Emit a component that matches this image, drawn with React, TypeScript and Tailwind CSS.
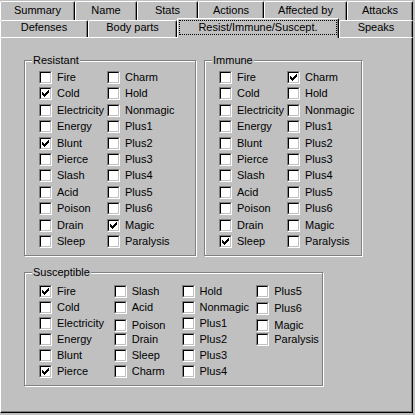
import React from 'react';

type Item = { label: string; checked?: boolean; nudge?: string };

const resistant: Item[][] = [
  [
    { label: 'Fire' }, { label: 'Cold', checked: true }, { label: 'Electricity' }, { label: 'Energy' },
    { label: 'Blunt', checked: true }, { label: 'Pierce' }, { label: 'Slash' }, { label: 'Acid' },
    { label: 'Poison' }, { label: 'Drain' }, { label: 'Sleep' },
  ],
  [
    { label: 'Charm' }, { label: 'Hold' }, { label: 'Nonmagic' }, { label: 'Plus1' }, { label: 'Plus2' },
    { label: 'Plus3' }, { label: 'Plus4' }, { label: 'Plus5' }, { label: 'Plus6' },
    { label: 'Magic', checked: true }, { label: 'Paralysis' },
  ],
];

const immune: Item[][] = [
  [
    { label: 'Fire' }, { label: 'Cold' }, { label: 'Electricity' }, { label: 'Energy' }, { label: 'Blunt' },
    { label: 'Pierce' }, { label: 'Slash' }, { label: 'Acid' }, { label: 'Poison' }, { label: 'Drain' },
    { label: 'Sleep', checked: true },
  ],
  [
    { label: 'Charm', checked: true }, { label: 'Hold' }, { label: 'Nonmagic' }, { label: 'Plus1' },
    { label: 'Plus2' }, { label: 'Plus3' }, { label: 'Plus4' }, { label: 'Plus5' }, { label: 'Plus6' },
    { label: 'Magic' }, { label: 'Paralysis' },
  ],
];

const susceptible: { w: string; items: Item[] }[] = [
  {
    w: 'w-[75px]',
    items: [
      { label: 'Fire', checked: true }, { label: 'Cold' }, { label: 'Electricity' }, { label: 'Energy' },
      { label: 'Blunt' }, { label: 'Pierce', checked: true },
    ],
  },
  {
    w: 'w-[68px]',
    items: [
      { label: 'Slash' }, { label: 'Acid' }, { label: 'Poison', nudge: 'pt-[2px]' }, { label: 'Drain' },
      { label: 'Sleep' }, { label: 'Charm' },
    ],
  },
  {
    w: 'w-[75px]',
    items: [
      { label: 'Hold' }, { label: 'Nonmagic' }, { label: 'Plus1' }, { label: 'Plus2' }, { label: 'Plus3' },
      { label: 'Plus4' },
    ],
  },
  {
    w: 'w-[66px]',
    items: [
      { label: 'Plus5' }, { label: 'Plus6', nudge: 'pt-[1px]' }, { label: 'Magic', nudge: 'pt-[2px]' },
      { label: 'Paralysis' },
    ],
  },
];

function CheckMark() {
  return (
    <svg width="7" height="7" viewBox="0 0 7 7" shapeRendering="crispEdges">
      <path
        d="M6 0h1v1H6z M5 1h2v1H5z M0 2h1v1H0z M4 2h3v1H4z M0 3h2v1H0z M3 3h3v1H3z M0 4h5v1H0z M1 5h3v1H1z M2 6h1v1H2z"
        fill="#000"
      />
    </svg>
  );
}

function Check({ item, row }: { item: Item; row: string }) {
  return (
    <div className={`flex items-start ${row} ${item.nudge ?? ''}`}>
      <div className="w-[13px] h-[13px] shrink-0 border border-t-[#808080] border-l-[#808080] border-r-white border-b-white">
        <div className="w-full h-full flex items-center justify-center bg-white border border-t-black border-l-black border-r-[#c0c0c0] border-b-[#c0c0c0]">
          {item.checked && <CheckMark />}
        </div>
      </div>
      <span className="ml-[5px] leading-[13px] whitespace-nowrap">{item.label}</span>
    </div>
  );
}

function Group({ title, className, children }: { title: string; className: string; children: React.ReactNode }) {
  return (
    <div className={`relative border border-[#808080] shadow-[inset_1px_1px_0_#fff,1px_1px_0_#fff] ${className}`}>
      <span className="absolute -top-[7px] left-[7px] px-[1px] bg-[#c0c0c0] leading-[13px]">{title}</span>
      {children}
    </div>
  );
}

function Tab({ label, w, row2 }: { label: string; w: string; row2?: boolean }) {
  return (
    <div
      className={`${w} ${row2 ? 'h-[17px]' : 'h-[19px] pt-[2px]'} shrink-0 text-center leading-[13px] border-l border-t border-r border-white border-r-black rounded-t-[2px] shadow-[inset_-1px_0_0_#808080]`}
    >
      {label}
    </div>
  );
}

export default function App() {
  return (
    <div className="w-[415px] h-[415px] overflow-hidden bg-[#c0c0c0] pt-[1px] text-[11px] text-black font-['Liberation_Sans',Arial,sans-serif]">
      {/* Tab rows */}
      <div className="flex w-[413px]">
        <Tab label="Summary" w="w-[75px]" />
        <Tab label="Name" w="w-[62px]" />
        <Tab label="Stats" w="w-[61px]" />
        <Tab label="Actions" w="w-[66px]" />
        <Tab label="Affected by" w="w-[83px]" />
        <Tab label="Attacks" w="w-[66px]" />
      </div>
      <div className="flex w-[413px] h-[17px]">
        <Tab label="Defenses" w="w-[88px]" row2 />
        <Tab label="Body parts" w="w-[89px]" row2 />
        <div className="relative z-10 w-[162px] h-[20px] -mt-[2px] shrink-0 bg-[#c0c0c0] border-l border-t border-r border-white border-r-black rounded-t-[2px] shadow-[inset_-1px_0_0_#808080] pt-[1px] px-[1px]">
          <div className="h-[15px] border border-dotted border-black flex items-center justify-center leading-[11px]">
            Resist/Immune/Suscept.
          </div>
        </div>
        <Tab label="Speaks" w="w-[74px]" row2 />
      </div>

      {/* Page */}
      <div className="w-[413px] h-[376px] border border-white border-r-black border-b-black shadow-[inset_-1px_-1px_0_#808080] px-[23px] pt-[22px]">
        <div className="flex gap-[8px]">
          <Group title="Resistant" className="w-[172px] h-[196px]">
            <div className="flex pl-[14px] pt-[10px]">
              {resistant.map((col, i) => (
                <div key={i} className="w-[68px] flex flex-col">
                  {col.map(it => (
                    <Check key={it.label} item={it} row="h-[16.4px]" />
                  ))}
                </div>
              ))}
            </div>
          </Group>
          <Group title="Immune" className="w-[158px] h-[196px]">
            <div className="flex pl-[14px] pt-[10px]">
              {immune.map((col, i) => (
                <div key={i} className="w-[68px] flex flex-col">
                  {col.map(it => (
                    <Check key={it.label} item={it} row="h-[16.4px]" />
                  ))}
                </div>
              ))}
            </div>
          </Group>
        </div>

        <Group title="Susceptible" className="mt-[16px] w-[299px] h-[114px]">
          <div className="flex pl-[14px] pt-[12px]">
            {susceptible.map((col, i) => (
              <div key={i} className={`${col.w} flex flex-col`}>
                {col.items.map(it => (
                  <Check key={it.label} item={it} row="h-[16px]" />
                ))}
              </div>
            ))}
          </div>
        </Group>
      </div>
    </div>
  );
}
